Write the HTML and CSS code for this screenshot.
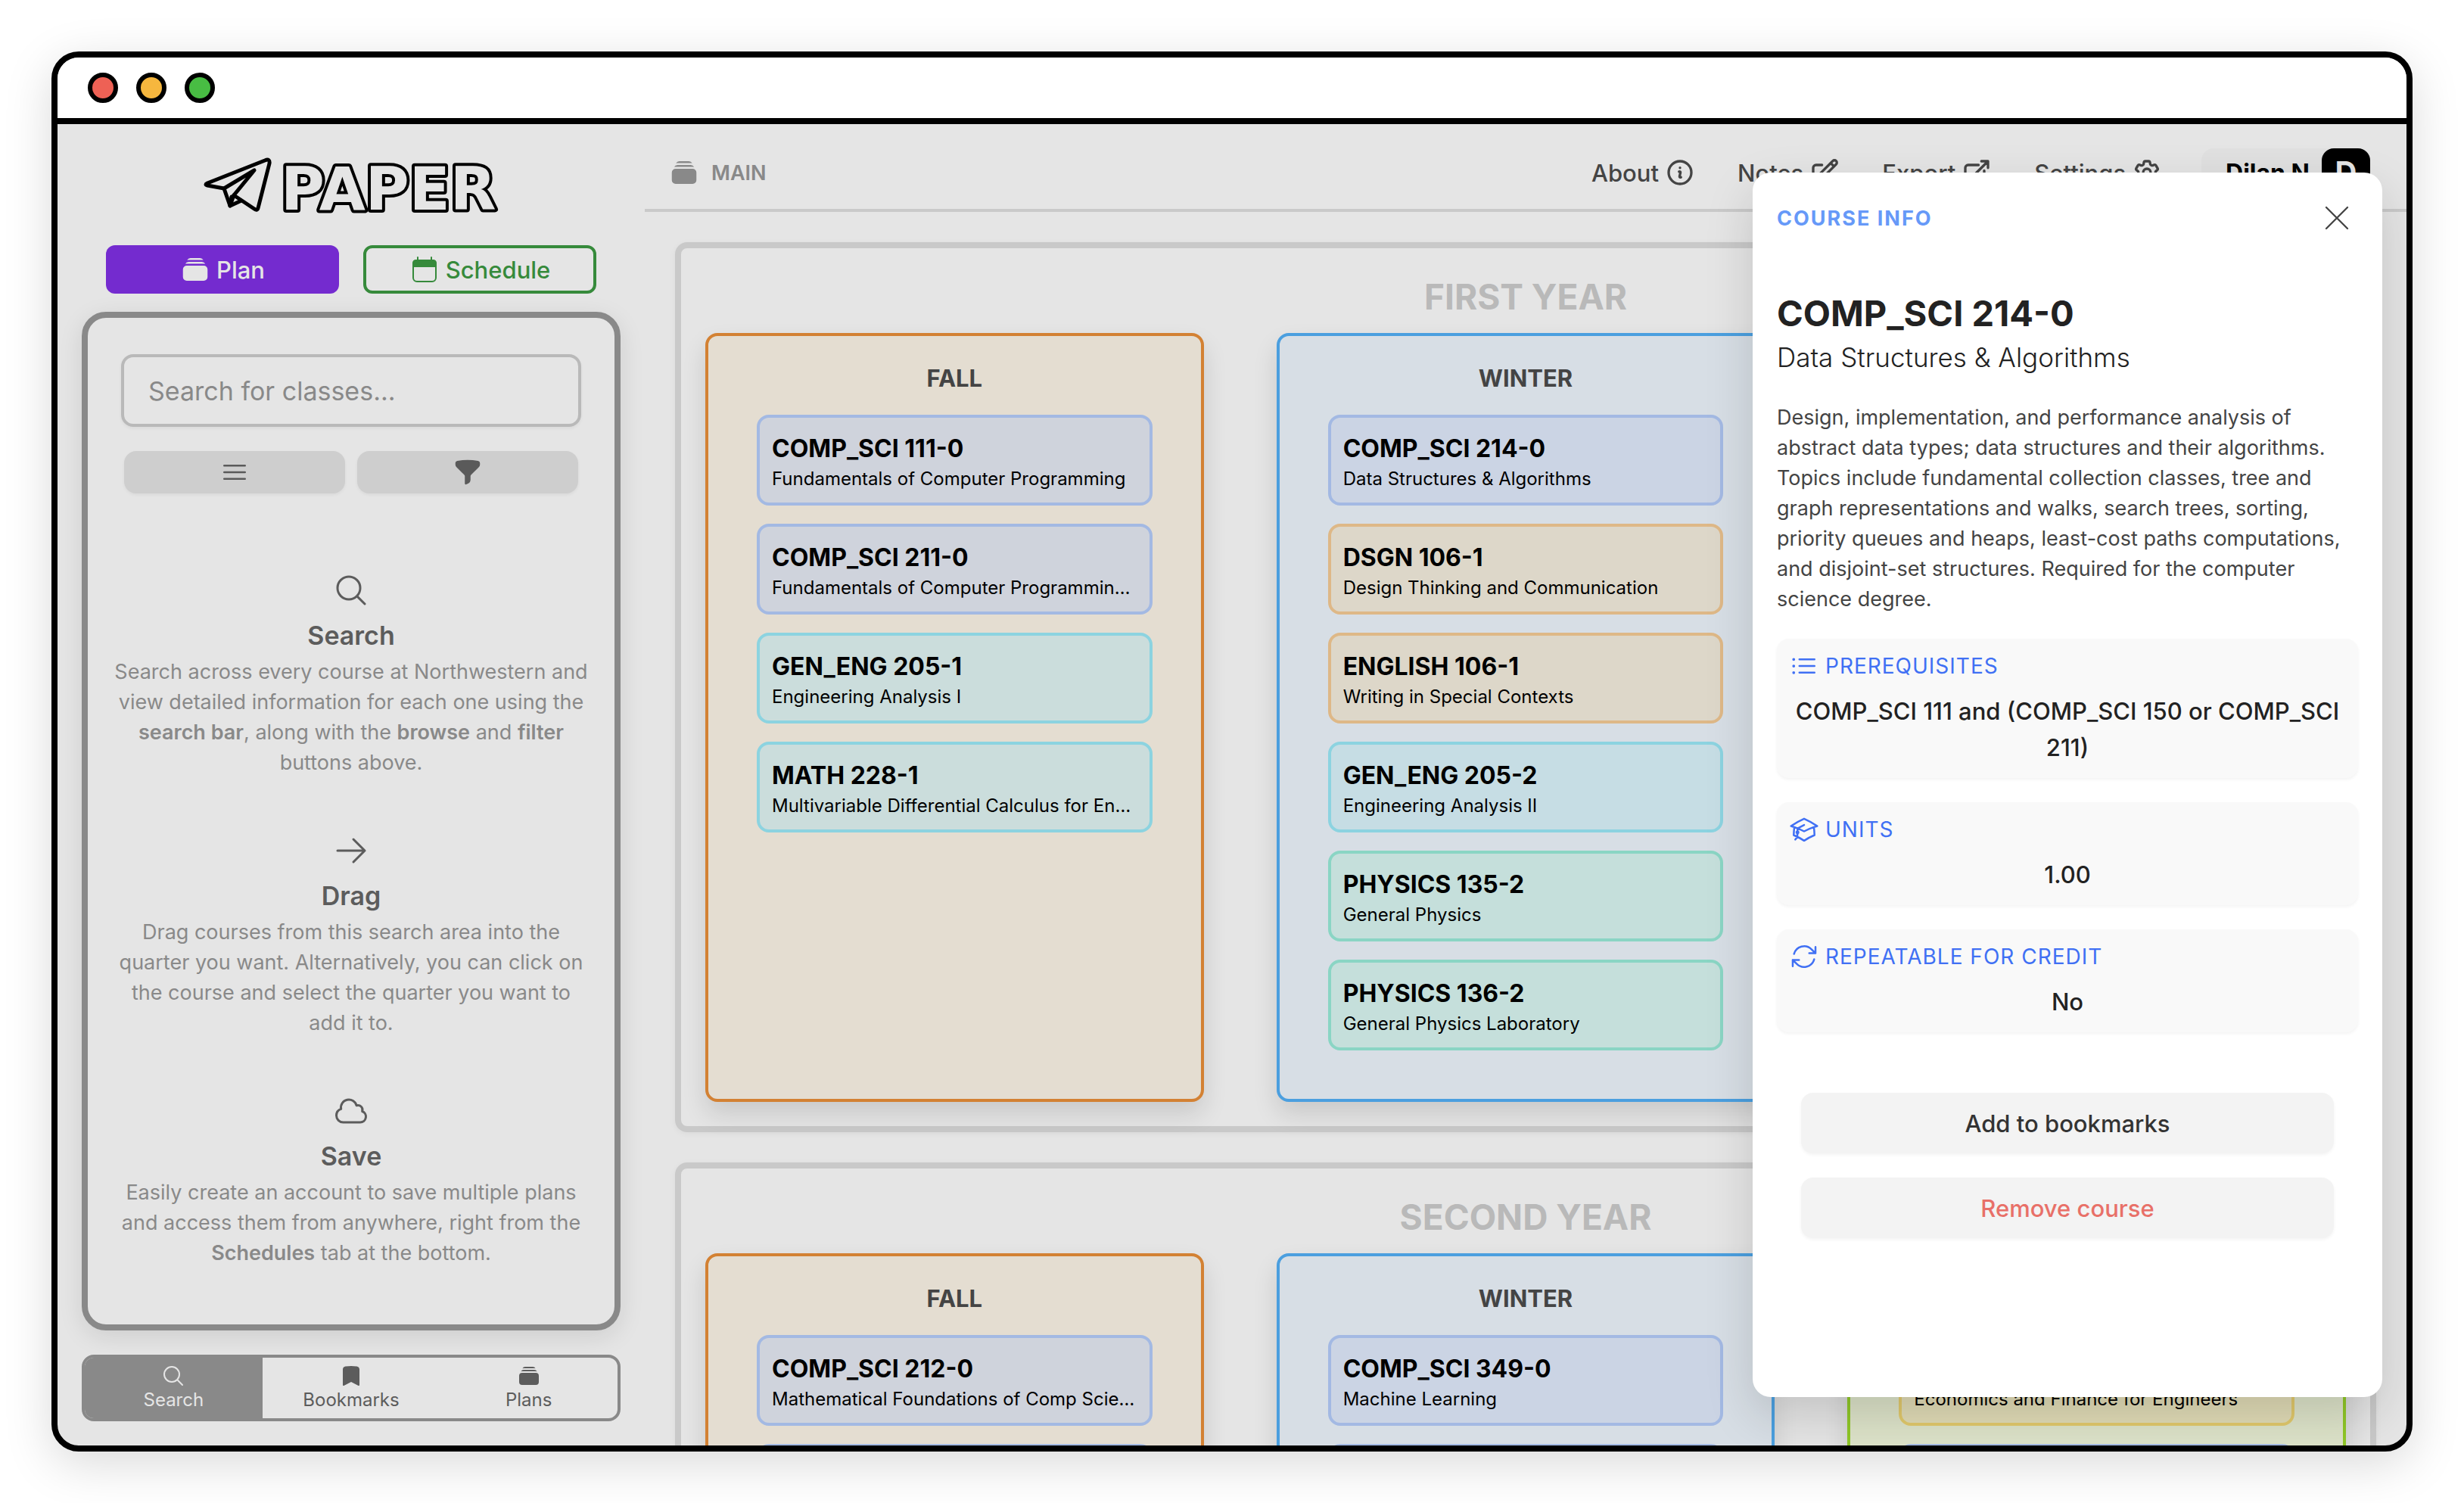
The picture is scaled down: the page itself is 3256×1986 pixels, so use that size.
FILE: index.html
```html
<!DOCTYPE html>
<html lang="en">
<head>
<meta charset="utf-8">
<title>Paper</title>
<link rel="stylesheet" href="styles.css">
</head>
<body>
<svg class="sprite" aria-hidden="true">
  <symbol id="stack" viewBox="0 0 24 24"><path fill="currentColor" stroke="none" d="M5.566 4.657A4.505 4.505 0 016.75 4.5h10.5c.41 0 .806.055 1.183.157A3 3 0 0015.75 3h-7.5a3 3 0 00-2.684 1.657zM2.25 12a3 3 0 013-3h13.5a3 3 0 013 3v6a3 3 0 01-3 3H5.25a3 3 0 01-3-3v-6zM5.25 7.5c-.41 0-.806.055-1.184.157A3 3 0 016.75 6h10.5a3 3 0 012.683 1.657A4.505 4.505 0 0018.75 7.5H5.25z"/></symbol>
  <symbol id="search" viewBox="0 0 24 24"><path d="M21 21l-5.197-5.197m0 0A7.5 7.5 0 105.196 5.196a7.5 7.5 0 0010.607 10.607z"/></symbol>
</svg>
<div class="window">
  <div class="titlebar">
    <span class="dot dot-red"></span>
    <span class="dot dot-yellow"></span>
    <span class="dot dot-green"></span>
  </div>
  <div class="app">
    <div class="sidebar">
      <svg class="logo" viewBox="0 0 392 96" role="img" aria-label="Paper">
        <g fill="none" stroke="#000" stroke-width="5" stroke-linejoin="round" stroke-linecap="round">
          <path d="M6 46 L82 16 Q89 13 88 20 L73 79 Q72 83 68 80 L41 62 L36 76 L28 53 L6 49 Q2 48 6 46Z"/>
          <path d="M28 53 L68 29 L41 62 M36 76 L51 69 M36 76 L38 64"/>
        </g>
        <text class="logo-text" x="103" y="81">PAPER</text>
      </svg>
      <div class="modes">
        <button class="mode mode-plan"><svg class="icon"><use href="#stack"/></svg>Plan</button>
        <button class="mode mode-schedule">
          <svg class="icon" viewBox="0 0 40 40"><rect x="5" y="8" width="30" height="28" rx="5" stroke-width="2"/><path fill="currentColor" stroke="none" d="M4 17v-5q0-5 5-5h22q5 0 5 5v5z"/><path stroke-width="2" d="M11 4v4M29 4v4"/></svg>Schedule
        </button>
      </div>
      <div class="finder">
        <input class="finder-input" type="text" placeholder="Search for classes..." aria-label="Search for classes">
        <div class="finder-tools">
          <button class="tool" aria-label="Browse"><svg class="icon" viewBox="0 0 24 24"><path d="M3.75 6.75h16.5M3.75 12h16.5m-16.5 5.25h16.5"/></svg></button>
          <button class="tool" aria-label="Filter"><svg class="icon" viewBox="0 0 24 24"><path fill="currentColor" stroke="none" d="M3.792 2.938A49.069 49.069 0 0112 2.25c2.797 0 5.54.236 8.209.688a1.857 1.857 0 011.541 1.836v1.044a3 3 0 01-.879 2.121l-6.182 6.182a1.5 1.5 0 00-.439 1.061v2.927a3 3 0 01-1.658 2.684l-1.757.878A.75.75 0 019.75 21v-5.818a1.5 1.5 0 00-.44-1.06L3.13 7.938a3 3 0 01-.879-2.121V4.774c0-.897.64-1.683 1.542-1.836z"/></svg></button>
        </div>
        <div class="tips">
          <section class="tip">
            <svg class="icon-tip"><use href="#search"/></svg>
            <h3>Search</h3>
            <p>Search across every course at Northwestern and view detailed information for each one using the <b>search bar</b>, along with the <b>browse</b> and <b>filter</b> buttons above.</p>
          </section>
          <section class="tip">
            <svg class="icon-tip" viewBox="0 0 24 24"><path d="M13.5 4.5L21 12m0 0l-7.5 7.5M21 12H3"/></svg>
            <h3>Drag</h3>
            <p>Drag courses from this search area into the quarter you want. Alternatively, you can click on the course and select the quarter you want to add it to.</p>
          </section>
          <section class="tip">
            <svg class="icon-tip" viewBox="0 0 24 24"><path d="M2.25 15a4.5 4.5 0 004.5 4.5H18a3.75 3.75 0 001.332-7.257 3 3 0 00-3.758-3.848 5.25 5.25 0 00-10.233 2.33A4.502 4.502 0 002.25 15z"/></svg>
            <h3>Save</h3>
            <p>Easily create an account to save multiple plans and access them from anywhere, right from the <b>Schedules</b> tab at the bottom.</p>
          </section>
        </div>
      </div>
      <nav class="tabs">
        <button class="tab tab-active"><svg class="icon-small"><use href="#search"/></svg>Search</button>
        <button class="tab"><svg class="icon-small" viewBox="0 0 24 24"><path fill="currentColor" stroke="none" d="M6.32 2.577a49.255 49.255 0 0111.36 0c1.497.174 2.57 1.46 2.57 2.93V21a.75.75 0 01-1.085.67L12 18.089l-7.165 3.583A.75.75 0 013.75 21V5.507c0-1.47 1.073-2.756 2.57-2.93z"/></svg>Bookmarks</button>
        <button class="tab"><svg class="icon-small"><use href="#stack"/></svg>Plans</button>
      </nav>
    </div>

    <main class="main">
      <header class="topbar">
        <div class="plan-name"><svg class="icon"><use href="#stack"/></svg>MAIN</div>
        <nav class="menu">
          <button class="menu-item">About <svg class="icon" viewBox="0 0 24 24"><path d="M11.25 11.25l.041-.02a.75.75 0 011.063.852l-.708 2.836a.75.75 0 001.063.853l.041-.021M21 12a9 9 0 11-18 0 9 9 0 0118 0zm-9-3.75h.008v.008H12V8.25z"/></svg></button>
          <button class="menu-item">Notes <svg class="icon" viewBox="0 0 24 24"><path d="M16.862 4.487l1.687-1.688a1.875 1.875 0 112.652 2.652L10.582 16.07a4.5 4.5 0 01-1.897 1.13L6 18l.8-2.685a4.5 4.5 0 011.13-1.897l8.932-8.931zm0 0L19.5 7.125M18 14v4.75A2.25 2.25 0 0115.75 21H5.25A2.25 2.25 0 013 18.75V8.25A2.25 2.25 0 015.25 6H10"/></svg></button>
          <button class="menu-item">Export <svg class="icon" viewBox="0 0 24 24"><path d="M13.5 6H5.25A2.25 2.25 0 003 8.25v10.5A2.25 2.25 0 005.25 21h10.5A2.25 2.25 0 0018 18.75V10.5m-10.5 6L21 3m0 0h-5.25M21 3v5.25"/></svg></button>
          <button class="menu-item">Settings <svg class="icon" viewBox="0 0 24 24"><path d="M9.594 3.94c.09-.542.56-.94 1.11-.94h2.593c.55 0 1.02.398 1.11.94l.213 1.281c.063.374.313.686.645.87.074.04.147.083.22.127.324.196.72.257 1.075.124l1.217-.456a1.125 1.125 0 011.37.49l1.296 2.247a1.125 1.125 0 01-.26 1.431l-1.003.827c-.293.24-.438.613-.431.992a6.759 6.759 0 010 .255c-.007.378.138.75.43.99l1.005.828c.424.35.534.954.26 1.43l-1.298 2.247a1.125 1.125 0 01-1.369.491l-1.217-.456c-.355-.133-.75-.072-1.076.124a6.57 6.57 0 01-.22.128c-.331.183-.581.495-.644.869l-.213 1.28c-.09.543-.56.941-1.11.941h-2.594c-.55 0-1.02-.398-1.11-.94l-.213-1.281c-.062-.374-.312-.686-.644-.87a6.52 6.52 0 01-.22-.127c-.325-.196-.72-.257-1.076-.124l-1.217.456a1.125 1.125 0 01-1.369-.49l-1.297-2.247a1.125 1.125 0 01.26-1.431l1.004-.827c.292-.24.437-.613.43-.992a6.932 6.932 0 010-.255c.007-.378-.138-.75-.43-.99l-1.004-.828a1.125 1.125 0 01-.26-1.43l1.297-2.247a1.125 1.125 0 011.37-.491l1.216.456c.356.133.751.072 1.076-.124.072-.044.146-.087.22-.128.332-.183.582-.495.644-.869l.214-1.281z M15 12a3 3 0 11-6 0 3 3 0 016 0z"/></svg></button>
          <button class="profile">Dilan N<span class="avatar">D</span></button>
        </nav>
      </header>

      <div class="board">
        <section class="year">
          <h2>FIRST YEAR</h2>
          <div class="quarters">
            <div class="quarter fall">
              <h3>FALL</h3>
              <article class="course blue"><h4>COMP_SCI 111-0</h4><p>Fundamentals of Computer Programming</p></article>
              <article class="course blue"><h4>COMP_SCI 211-0</h4><p>Fundamentals of Computer Programming II</p></article>
              <article class="course cyan"><h4>GEN_ENG 205-1</h4><p>Engineering Analysis I</p></article>
              <article class="course cyan"><h4>MATH 228-1</h4><p>Multivariable Differential Calculus for Engineering</p></article>
            </div>
            <div class="quarter winter">
              <h3>WINTER</h3>
              <article class="course blue"><h4>COMP_SCI 214-0</h4><p>Data Structures &amp; Algorithms</p></article>
              <article class="course orange"><h4>DSGN 106-1</h4><p>Design Thinking and Communication</p></article>
              <article class="course orange"><h4>ENGLISH 106-1</h4><p>Writing in Special Contexts</p></article>
              <article class="course cyan"><h4>GEN_ENG 205-2</h4><p>Engineering Analysis II</p></article>
              <article class="course green"><h4>PHYSICS 135-2</h4><p>General Physics</p></article>
              <article class="course green"><h4>PHYSICS 136-2</h4><p>General Physics Laboratory</p></article>
            </div>
            <div class="quarter spring"></div>
          </div>
        </section>
        <section class="year">
          <h2>SECOND YEAR</h2>
          <div class="quarters">
            <div class="quarter fall">
              <h3>FALL</h3>
              <article class="course blue"><h4>COMP_SCI 212-0</h4><p>Mathematical Foundations of Comp Science</p></article>
              <article class="course blue"></article>
            </div>
            <div class="quarter winter">
              <h3>WINTER</h3>
              <article class="course blue"><h4>COMP_SCI 349-0</h4><p>Machine Learning</p></article>
              <article class="course blue"></article>
            </div>
            <div class="quarter spring">
              <h3>SPRING</h3>
              <article class="course yellow"><h4>IEMS 326-0</h4><p>Economics and Finance for Engineers</p></article>
              <article class="course blue"></article>
            </div>
          </div>
        </section>
      </div>
    </main>

    <aside class="info">
      <div class="info-head">
        <span class="info-kicker">COURSE INFO</span>
        <button class="close" aria-label="Close"><svg class="icon-close" viewBox="0 0 24 24"><path d="M6 18L18 6M6 6l12 12"/></svg></button>
      </div>
      <h1>COMP_SCI 214-0</h1>
      <p class="info-subtitle">Data Structures &amp; Algorithms</p>
      <p class="info-text">Design, implementation, and performance analysis of abstract data types; data structures and their algorithms. Topics include fundamental collection classes, tree and graph representations and walks, search trees, sorting, priority queues and heaps, least-cost paths computations, and disjoint-set structures. Required for the computer science degree.</p>
      <div class="facts">
        <div class="fact">
          <div class="fact-label"><svg class="icon" viewBox="0 0 24 24"><path d="M8.25 6.75h12M8.25 12h12m-12 5.25h12M3.75 6.75h.007v.008H3.75V6.75zm.375 0a.375.375 0 11-.75 0 .375.375 0 01.75 0zM3.75 12h.007v.008H3.75V12zm.375 0a.375.375 0 11-.75 0 .375.375 0 01.75 0zm-.375 5.25h.007v.008H3.75v-.008zm.375 0a.375.375 0 11-.75 0 .375.375 0 01.75 0z"/></svg>PREREQUISITES</div>
          <div class="fact-value">COMP_SCI 111 and (COMP_SCI 150 or COMP_SCI 211)</div>
        </div>
        <div class="fact">
          <div class="fact-label"><svg class="icon" viewBox="0 0 24 24"><path d="M4.26 10.147a60.436 60.436 0 00-.491 6.347A48.627 48.627 0 0112 20.904a48.627 48.627 0 018.232-4.41 60.46 60.46 0 00-.491-6.347m-15.482 0a50.57 50.57 0 00-2.658-.813A59.905 59.905 0 0112 3.493a59.902 59.902 0 0110.399 5.84c-.896.248-1.783.52-2.658.814m-15.482 0A50.697 50.697 0 0112 13.489a50.702 50.702 0 017.74-3.342M6.75 15a.75.75 0 100-1.5.75.75 0 000 1.5zm0 0v-3.675A55.378 55.378 0 0112 8.443m-7.007 11.55A5.981 5.981 0 006.75 15.75v-1.5"/></svg>UNITS</div>
          <div class="fact-value">1.00</div>
        </div>
        <div class="fact">
          <div class="fact-label"><svg class="icon" viewBox="0 0 24 24"><path d="M16.023 9.348h4.992v-.001M2.985 19.644v-4.992m0 0h4.992m-4.993 0l3.181 3.183a8.25 8.25 0 0013.803-3.7M4.031 9.865a8.25 8.25 0 0113.803-3.7l3.181 3.182m0-4.991v4.99"/></svg>REPEATABLE FOR CREDIT</div>
          <div class="fact-value">No</div>
        </div>
      </div>
      <div class="actions">
        <button class="action">Add to bookmarks</button>
        <button class="action action-danger">Remove course</button>
      </div>
    </aside>
  </div>
</div>
</body>
</html>
```
FILE: styles.css
```css
* {
  box-sizing: border-box;
  margin: 0;
}

body {
  height: 100vh;
  padding: 68px;
  background: #fff;
  font-family: Inter, "Liberation Sans", sans-serif;
  overflow: hidden;
}

button,
input {
  font: inherit;
  color: inherit;
  background: none;
  border: 0;
  padding: 0;
}

svg {
  fill: none;
  stroke: currentColor;
  stroke-width: 1.5;
  stroke-linecap: round;
  stroke-linejoin: round;
  flex: none;
}

.sprite {
  position: absolute;
  width: 0;
  height: 0;
}

.icon {
  width: 40px;
  height: 40px;
}

.icon-small {
  width: 32px;
  height: 32px;
}

.icon-tip {
  width: 48px;
  height: 48px;
}

.icon-close {
  width: 56px;
  height: 56px;
  stroke-width: 1;
}

/* Browser window */

.window {
  height: 100%;
  display: flex;
  flex-direction: column;
  border: 8px solid #000;
  border-radius: 36px;
  background: #e5e5e5;
  box-shadow: 0 16px 64px rgba(0, 0, 0, .15);
  overflow: hidden;
}

.titlebar {
  flex: none;
  display: flex;
  align-items: center;
  gap: 24px;
  height: 88px;
  padding: 0 40px;
  background: #fff;
  border-bottom: 8px solid #000;
}

.dot {
  width: 40px;
  height: 40px;
  border: 6px solid #000;
  border-radius: 50%;
}

.dot-red { background: #ee6155; }
.dot-yellow { background: #f6b73e; }
.dot-green { background: #48bd43; }

.app {
  position: relative;
  flex: 1;
  min-height: 0;
  display: flex;
}

/* Sidebar */

.sidebar {
  flex: none;
  width: 776px;
  padding: 32px;
  display: flex;
  flex-direction: column;
}

.logo {
  align-self: center;
  width: 392px;
  height: 96px;
  margin-bottom: 32px;
}

.logo-text {
  font-family: "DejaVu Sans", sans-serif;
  font-size: 79px;
  font-weight: 700;
  fill: #e5e5e5;
  stroke: #000;
  stroke-width: 8px;
  paint-order: stroke;
}

.modes {
  display: grid;
  grid-template-columns: 1fr 1fr;
  gap: 32px;
  padding: 0 32px;
  margin-bottom: 24px;
}

.mode {
  display: flex;
  align-items: center;
  justify-content: center;
  gap: 8px;
  height: 64px;
  border-radius: 12px;
  font-size: 31px;
  font-weight: 500;
}

.mode-plan {
  background: #742bcf;
  color: #e5e5e5;
}

.mode-schedule {
  border: 4px solid #368a3b;
  color: #368a3b;
}

.finder {
  flex: 1;
  min-height: 0;
  padding: 48px 44px;
  border: 8px solid #898989;
  border-radius: 32px;
  box-shadow: 0 8px 32px rgba(0, 0, 0, .1);
}

.finder-input {
  display: block;
  width: 100%;
  height: 96px;
  padding: 0 32px;
  border: 4px solid #b9b9b9;
  border-radius: 16px;
  font-size: 34px;
  box-shadow: 0 2px 4px rgba(0, 0, 0, .05);
}

.finder-input::placeholder {
  color: #898989;
  opacity: 1;
}

.finder-tools {
  display: grid;
  grid-template-columns: 1fr 1fr;
  gap: 16px;
  padding: 32px 4px 0;
}

.tool {
  display: flex;
  align-items: center;
  justify-content: center;
  height: 56px;
  border-radius: 16px;
  background: #cecece;
  color: #5a5a5a;
  box-shadow: 0 2px 4px rgba(0, 0, 0, .05);
}

.tips {
  display: flex;
  flex-direction: column;
  gap: 72px;
  margin: 104px -12px 0;
}

.tip {
  display: flex;
  flex-direction: column;
  align-items: center;
  text-align: center;
  color: #5c5c5c;
}

.tip h3 {
  margin-top: 8px;
  font-size: 34px;
  line-height: 56px;
  font-weight: 600;
}

.tip p {
  font-size: 27px;
  line-height: 40px;
  color: #898989;
}

.tip b {
  font-weight: 600;
}

.tabs {
  display: grid;
  grid-template-columns: repeat(3, 1fr);
  margin-top: 32px;
  border: 4px solid #898989;
  border-radius: 16px;
  overflow: hidden;
}

.tab {
  display: flex;
  flex-direction: column;
  align-items: center;
  padding: 8px;
  font-size: 24px;
  line-height: 32px;
  color: #5c5c5c;
}

.tab-active {
  background: #898989;
  color: #e5e5e5;
}

/* Main area */

.main {
  flex: 1;
  min-width: 0;
  display: flex;
  flex-direction: column;
  overflow: hidden;
}

.topbar {
  flex: none;
  display: flex;
  align-items: center;
  justify-content: space-between;
  height: 116px;
  padding: 16px 48px 0 32px;
  border-bottom: 4px solid #c9c9c9;
}

.plan-name {
  display: flex;
  align-items: center;
  gap: 16px;
  font-size: 27px;
  font-weight: 600;
  color: #898989;
}

.menu {
  display: flex;
  align-items: center;
  gap: 56px;
  color: #444;
}

.menu-item {
  display: flex;
  align-items: center;
  gap: 8px;
  font-size: 31px;
  font-weight: 500;
}

.menu-item .icon {
  stroke-width: 2;
}

.profile {
  display: flex;
  align-items: center;
  gap: 16px;
  margin-left: -4px;
  padding-left: 32px;
  border-radius: 16px;
  background: #e0e0e0;
  color: #000;
  font-size: 32px;
  font-weight: 700;
}

.avatar {
  width: 64px;
  border-radius: 16px;
  background: #000;
  color: #e5e5e5;
  font-size: 40px;
  line-height: 64px;
}

.board {
  flex: 1;
  min-height: 0;
  display: flex;
  flex-direction: column;
  gap: 40px;
  padding: 40px;
  overflow: hidden;
}

.year {
  flex: none;
  padding: 32px;
  border: 8px solid #c9c9c9;
  border-radius: 16px;
  box-shadow: 0 2px 8px rgba(0, 0, 0, .05);
}

.year h2 {
  margin-bottom: 16px;
  font-size: 46px;
  line-height: 64px;
  font-weight: 700;
  text-align: center;
  color: #b9b9b9;
}

.quarters {
  display: grid;
  grid-template-columns: repeat(3, 1fr);
  gap: 96px;
}

.quarter {
  display: flex;
  flex-direction: column;
  gap: 24px;
  min-width: 0;
  padding: 32px 64px 64px;
  border: 4px solid;
  border-radius: 16px;
  box-shadow: 0 16px 32px rgba(0, 0, 0, .12);
}

.quarter h3 {
  font-size: 31px;
  line-height: 48px;
  font-weight: 700;
  text-align: center;
  color: #444;
}

.fall { border-color: #d38133; background: #e4ddd1; }
.winter { border-color: #4b9fdf; background: #d7dee5; }
.spring { border-color: #8fc727; background: #dde3c9; }

.course {
  height: 120px;
  padding: 21px 16px 11px;
  border: 4px solid;
  border-radius: 16px;
}

.course h4 {
  font-size: 32px;
  line-height: 40px;
  font-weight: 700;
}

.course p {
  font-size: 24px;
  line-height: 40px;
  white-space: nowrap;
  overflow: hidden;
  text-overflow: ellipsis;
}

.course h4,
.course p {
  color: #000;
}

.blue { border-color: #a3b9e3; background: #cbd4e4; }
.cyan { border-color: #8cd3e0; background: #c6dde4; }
.orange { border-color: #deb887; background: #ddd7c9; }
.green { border-color: #8ad5c4; background: #c5dfdb; }
.yellow { border-color: #e1c96c; background: #e0dbb6; }
.fall .blue { background: #cfd3dc; }
.fall .cyan { background: #cbdddc; }

/* Course details */

.info {
  position: absolute;
  top: 64px;
  right: 32px;
  bottom: 64px;
  width: 832px;
  padding: 32px;
  border-radius: 24px;
  background: #fff;
  color: #222;
  box-shadow: 0 24px 64px rgba(0, 0, 0, .15);
}

.info-head {
  display: flex;
  align-items: center;
  justify-content: space-between;
  margin-bottom: 64px;
}

.info-kicker {
  font-size: 27px;
  font-weight: 700;
  letter-spacing: 2px;
  color: #6699f8;
}

.close {
  display: flex;
  color: #444;
}

.info h1 {
  font-size: 47px;
  line-height: 68px;
  font-weight: 700;
}

.info-subtitle {
  font-size: 35px;
  line-height: 48px;
  font-weight: 300;
}

.info-text {
  margin: 36px 0 32px;
  font-size: 27px;
  line-height: 40px;
  color: #444;
}

.facts {
  display: flex;
  flex-direction: column;
  gap: 32px;
}

.fact {
  padding: 16px;
  border-radius: 16px;
  background: #f9f9f9;
  box-shadow: 0 2px 4px rgba(0, 0, 0, .05);
}

.fact-label {
  display: flex;
  align-items: center;
  gap: 8px;
  margin-bottom: 16px;
  font-size: 28px;
  line-height: 40px;
  letter-spacing: 1px;
  color: #4070f4;
}

.fact-value {
  font-size: 31px;
  line-height: 48px;
  font-weight: 500;
  text-align: center;
}

.actions {
  display: flex;
  flex-direction: column;
  gap: 32px;
  padding: 80px 32px 0;
}

.action {
  height: 80px;
  border-radius: 16px;
  background: #f3f3f3;
  box-shadow: 0 2px 4px rgba(0, 0, 0, .05);
  color: #333;
  font-size: 31px;
  font-weight: 500;
}

.action-danger {
  color: #e87068;
}
```
